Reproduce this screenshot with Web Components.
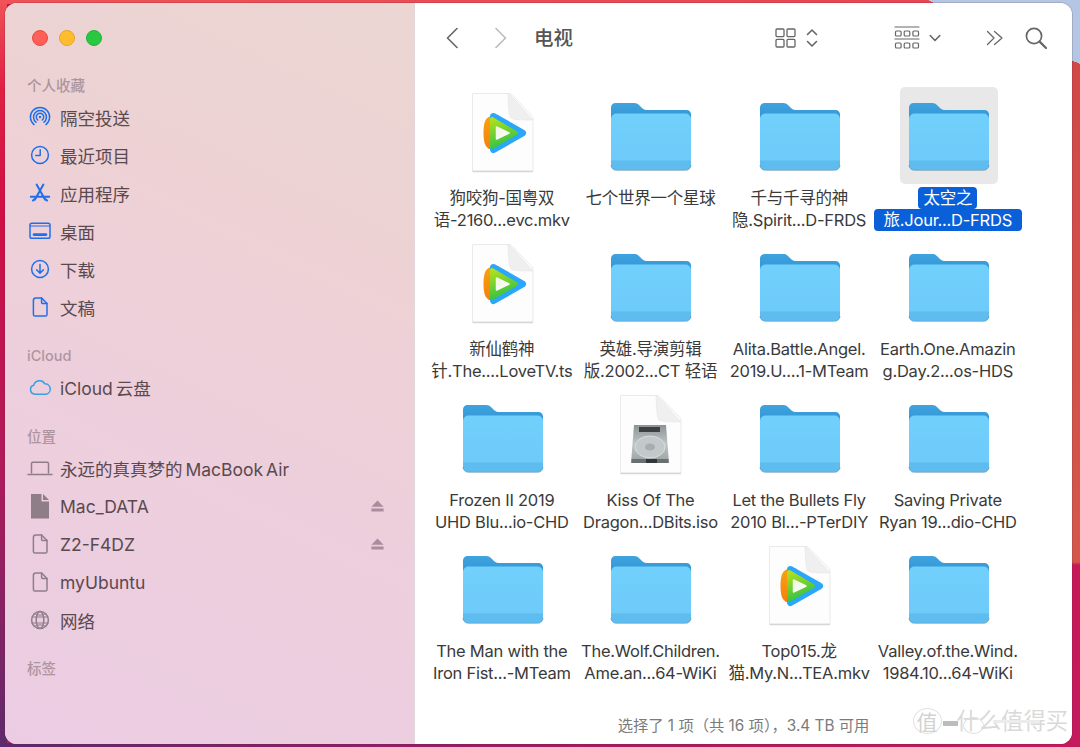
<!DOCTYPE html>
<html lang="zh">
<head>
<meta charset="utf-8">
<title>电视</title>
<style>
  html, body { margin: 0; height: 100%; overflow: hidden; }
  body { font-family: Inter, "Noto Sans CJK SC", sans-serif; }
</style>
</head>
<body>
<mac-desktop>
  <finder-window>
    <finder-sidebar slot="sidebar">
      <side-section label="个人收藏">
        <side-item icon="airdrop">隔空投送</side-item>
        <side-item icon="clock">最近项目</side-item>
        <side-item icon="apps">应用程序</side-item>
        <side-item icon="desktop">桌面</side-item>
        <side-item icon="download">下载</side-item>
        <side-item icon="doc">文稿</side-item>
      </side-section>
      <side-section label="iCloud">
        <side-item icon="cloud">iCloud 云盘</side-item>
      </side-section>
      <side-section label="位置" style="margin-top:19px">
        <side-item icon="laptop" tone="gray">永远的真真梦的 MacBook Air</side-item>
        <side-item icon="docfill" tone="gray" eject>Mac_DATA</side-item>
        <side-item icon="doc" tone="gray" eject>Z2-F4DZ</side-item>
        <side-item icon="doc" tone="gray">myUbuntu</side-item>
        <side-item icon="globe" tone="gray">网络</side-item>
      </side-section>
      <side-section label="标签"></side-section>
    </finder-sidebar>
    <finder-main slot="main">
      <finder-toolbar title="电视"></finder-toolbar>
      <file-grid>
        <file-item kind="video"><span>狗咬狗-国粤双</span><span>语-2160...evc.mkv</span></file-item>
        <file-item><span>七个世界一个星球</span></file-item>
        <file-item><span>千与千寻的神</span><span>隐.Spirit...D-FRDS</span></file-item>
        <file-item selected><span>太空之</span><span>旅.Jour...D-FRDS</span></file-item>

        <file-item kind="video"><span>新仙鹤神</span><span>针.The....LoveTV.ts</span></file-item>
        <file-item><span>英雄.导演剪辑</span><span>版.2002...CT 轻语</span></file-item>
        <file-item><span>Alita.Battle.Angel.</span><span>2019.U....1-MTeam</span></file-item>
        <file-item><span>Earth.One.Amazin</span><span>g.Day.2...os-HDS</span></file-item>

        <file-item><span>Frozen II 2019</span><span>UHD Blu...io-CHD</span></file-item>
        <file-item kind="disk"><span>Kiss Of The</span><span>Dragon...DBits.iso</span></file-item>
        <file-item><span>Let the Bullets Fly</span><span>2010 Bl...-PTerDIY</span></file-item>
        <file-item><span>Saving Private</span><span>Ryan 19...dio-CHD</span></file-item>

        <file-item><span>The Man with the</span><span>Iron Fist...-MTeam</span></file-item>
        <file-item><span>The.Wolf.Children.</span><span>Ame.an...64-WiKi</span></file-item>
        <file-item kind="video"><span>Top015.龙</span><span>猫.My.N...TEA.mkv</span></file-item>
        <file-item><span>Valley.of.the.Wind.</span><span>1984.10...64-WiKi</span></file-item>
      </file-grid>
      <status-bar>选择了 1 项（共 16 项），3.4 TB 可用</status-bar>
      <site-watermark></site-watermark>
    </finder-main>
  </finder-window>
</mac-desktop>

<script>
// iconos de la barra lateral, todos en un viewBox de 26x26
const SIDE_ICONS = {
  airdrop: `<path d="M7 20.6A9.6 9.6 0 1 1 19 20.6M9 18.2A6.5 6.5 0 1 1 17 18.2M10.8 16A3.7 3.7 0 1 1 15.2 16"/><circle cx="13" cy="13" r="1.2" fill="currentColor" stroke="none"/>`,
  clock: `<circle cx="13" cy="13" r="8.4"/><path d="M13.2 7.8V13.6H8.8"/>`,
  apps: `<path d="M9.6 4.6L18 19.6M16.4 4.6L8 19.6M3.8 16.8H22.2" stroke-width="2"/><path d="M6 20.5l1.4-1.2M20 20.5l-1.4-1.2" stroke-width="2"/>`,
  desktop: `<rect x="3" y="5.2" width="20" height="15" rx="1.8"/><path d="M3 8H23" stroke-width="1"/><path d="M7 16.6H19" stroke-width="2.6"/>`,
  download: `<circle cx="13" cy="13" r="8.4"/><path d="M13 8.4V17M9.6 13.8L13 17.2L16.4 13.8"/>`,
  doc: `<path d="M8.8 4H14.6L20 9.6V20.4A1.6 1.6 0 0 1 18.4 22H8A1.6 1.6 0 0 1 6.4 20.4V6.4A2.4 2.4 0 0 1 8.8 4Z"/><path d="M14.6 4V8.4A1.2 1.2 0 0 0 15.8 9.6H20"/>`,
  cloud: `<path d="M8 20.2A4.6 4.6 0 0 1 6.8 11.2A6 6 0 0 1 17.8 9.8A5.3 5.3 0 0 1 19.4 20.2Z"/>`,
  laptop: `<path d="M4.5 18V8.4A1.2 1.2 0 0 1 5.7 7.2H20.3A1.2 1.2 0 0 1 21.5 8.4V18"/><path d="M1 19.4H25"/>`,
  docfill: `<path d="M4 1H14.5V8.5H22V25.5H4Z" fill="currentColor" stroke="none"/><path d="M16 1L22 7H16Z" fill="currentColor" stroke="none"/>`,
  globe: `<circle cx="13" cy="13" r="8.4"/><ellipse cx="13" cy="13" rx="3.8" ry="8.4"/><path d="M5 10H21M5 16H21M7 6.5Q13 10 19 6.5M7 19.5Q13 16 19 19.5" stroke-width="1"/>`
}

class MacDesktop extends HTMLElement {
  constructor() {
    super()
    this.attachShadow({ mode: 'open' })
    this.shadowRoot.innerHTML = `
      <style>
        :host {
          display: block;
          box-sizing: border-box;
          width: 1080px;
          height: 747px;
          padding: 3px 8px 3px 5px;
          background:
            linear-gradient(22.7deg, transparent 1047px, #b3c7e4 1047px),
            linear-gradient(to bottom, #d04648 0, #d3584a 562px, transparent 565px) right top / 12px 100% no-repeat,
            linear-gradient(to right, #ef5257, #e64450) left top / 100% 4px no-repeat,
            linear-gradient(to bottom, #f05256 0, #e01f45 90px, #cf0f45 220px, #b01a5c 470px, #732668 680px, #5c2a6c 747px) left top / 7px 100% no-repeat,
            linear-gradient(to right, #5c2a6c 0, #8a1f66 300px, #b01a5c 700px, #c8185a 1080px) left bottom / 100% 4px no-repeat,
            linear-gradient(to bottom, #d01242, #c41a5e);
        }
      </style>
      <slot></slot>
    `
  }
}

class FinderWindow extends HTMLElement {
  constructor() {
    super()
    this.attachShadow({ mode: 'open' })
    this.shadowRoot.innerHTML = `
      <style>
        :host {
          display: flex;
          height: 100%;
          border-radius: 12px;
          overflow: hidden;
          background: #fff;
          box-shadow: 0 0 0 1px rgba(90, 40, 50, .18);
        }
      </style>
      <slot name="sidebar"></slot>
      <slot name="main"></slot>
    `
  }
}

class FinderSidebar extends HTMLElement {
  constructor() {
    super()
    this.attachShadow({ mode: 'open' })
    this.shadowRoot.innerHTML = `
      <style>
        :host {
          display: block;
          box-sizing: border-box;
          flex: 0 0 410px;
          padding: 27px 30px 0 22px;
          background: linear-gradient(205deg, #ebd6d2 0%, #edd2d4 28%, #edcfdc 58%, #ebcce3 100%);
          border-right: 1px solid #e3d6db;
        }
        .lights { display: flex; gap: 11px; margin: 0 0 28px 5px; }
        .lights i { width: 16px; height: 16px; border-radius: 50%; box-sizing: border-box; }
        .red { background: #ff5f57; border: 1px solid #e8483f; }
        .yellow { background: #ffbd2e; border: 1px solid #e5a524; }
        .green { background: #28c840; border: 1px solid #22b236; }
      </style>
      <div class="lights"><i class="red"></i><i class="yellow"></i><i class="green"></i></div>
      <slot></slot>
    `
  }
}

class SideSection extends HTMLElement {
  constructor() {
    super()
    this.attachShadow({ mode: 'open' })
  }

  connectedCallback() {
    this.shadowRoot.innerHTML = `
      <style>
        :host { display: block; margin-top: 18px; }
        .label {
          height: 24px;
          line-height: 24px;
          font-size: 14.5px;
          font-weight: 500;
          color: #ad959f;
        }
      </style>
      <div class="label">${this.getAttribute('label') ?? ''}</div>
      <slot></slot>
    `
  }
}

class SideItem extends HTMLElement {
  constructor() {
    super()
    this.attachShadow({ mode: 'open' })
  }

  connectedCallback() {
    const icon = this.getAttribute('icon') ?? 'doc'
    const color = icon === 'cloud' ? '#35a0e2' : this.getAttribute('tone') === 'gray' ? '#8f7d88' : '#1f6fec'
    const eject = this.hasAttribute('eject')
      ? `<svg class="eject" width="13" height="12" viewBox="0 0 13 12"><path d="M6.5 0.5L12.6 6.8H0.4Z M0.4 8.4H12.6V11.5H0.4Z" fill="#a98c9d"/></svg>`
      : ''
    this.shadowRoot.innerHTML = `
      <style>
        :host {
          display: flex;
          align-items: center;
          gap: 7px;
          height: 38px;
          font-size: 17.5px;
          word-spacing: -2px;
          color: #5a494f;
        }
        .icon { flex: none; color: ${color}; fill: none; stroke: currentColor; stroke-width: 1.5; stroke-linecap: round; stroke-linejoin: round; }
        .eject { margin-left: auto; }
      </style>
      <svg class="icon" width="26" height="26" viewBox="0 0 26 26">${SIDE_ICONS[icon]}</svg>
      <slot></slot>
      ${eject}
    `
  }
}

class FinderMain extends HTMLElement {
  constructor() {
    super()
    this.attachShadow({ mode: 'open' })
    this.shadowRoot.innerHTML = `
      <style>
        :host { display: flex; flex-direction: column; flex: 1; position: relative; background: #fff; }
      </style>
      <slot></slot>
    `
  }
}

class FinderToolbar extends HTMLElement {
  constructor() {
    super()
    this.attachShadow({ mode: 'open' })
  }

  connectedCallback() {
    this.shadowRoot.innerHTML = `
      <style>
        :host {
          display: flex;
          align-items: center;
          height: 70px;
          flex: none;
          padding-left: 31px;
          color: #666;
        }
        svg { flex: none; fill: none; stroke: currentColor; stroke-width: 1.6; stroke-linecap: round; stroke-linejoin: round; }
        h1 { margin: 0 0 3px 27px; font-size: 19.5px; font-weight: 500; color: #555; }
        .off { color: #bbb; margin-left: 37px; }
        .view { margin-left: auto; }
      </style>
      <svg width="12" height="22" viewBox="0 0 12 22"><path d="M11 1.5L1.5 11L11 20.5"/></svg>
      <svg class="off" width="12" height="22" viewBox="0 0 12 22"><path d="M1 1.5L10.5 11L1 20.5"/></svg>
      <h1>${this.getAttribute('title') ?? ''}</h1>
      <svg class="view" width="21" height="20" viewBox="0 0 21 20" style="stroke-width:1.3">
        <rect x="1" y="1" width="8" height="7.6" rx="1"/><rect x="12" y="1" width="8" height="7.6" rx="1"/>
        <rect x="1" y="11.4" width="8" height="7.6" rx="1"/><rect x="12" y="11.4" width="8" height="7.6" rx="1"/>
      </svg>
      <svg style="margin-left:10px" width="12" height="20" viewBox="0 0 12 20"><path d="M1.5 6.5L6 2L10.5 6.5M1.5 13.5L6 18L10.5 13.5"/></svg>
      <svg style="margin-left:76px;stroke-width:1.2" width="26" height="24" viewBox="0 0 26 24">
        <path d="M1 1H25M1 13H25"/>
        <rect x="1.5" y="5" width="5.6" height="5" rx="1"/><rect x="10.2" y="5" width="5.6" height="5" rx="1"/><rect x="18.9" y="5" width="5.6" height="5" rx="1"/>
        <rect x="1.5" y="17" width="5.6" height="5" rx="1"/><rect x="10.2" y="17" width="5.6" height="5" rx="1"/><rect x="18.9" y="17" width="5.6" height="5" rx="1"/>
      </svg>
      <svg style="margin-left:9px" width="12" height="8" viewBox="0 0 12 8"><path d="M1.2 1.5L6 6.5L10.8 1.5"/></svg>
      <svg style="margin-left:45px;stroke-width:1.3" width="18" height="16" viewBox="0 0 18 16"><path d="M1.5 1.5L8 8L1.5 14.5M8.5 1.5L16 8L8.5 14.5"/></svg>
      <svg style="margin:0 25px 0 21px;stroke-width:1.7" width="22" height="22" viewBox="0 0 22 22"><circle cx="9" cy="9" r="7.6"/><path d="M14.6 14.6L21 21" stroke-width="2.2"/></svg>
    `
  }
}

class FileGrid extends HTMLElement {
  constructor() {
    super()
    this.attachShadow({ mode: 'open' })
    this.shadowRoot.innerHTML = `
      <style>
        :host {
          display: grid;
          grid-template-columns: repeat(4, 148.67px);
          grid-auto-rows: 151px;
          flex: 1;
          padding: 14px 0 0 13.5px;
        }
      </style>
      <slot></slot>
    `
  }
}

const FOLDER_ICON = `
  <svg width="82" height="70" viewBox="0 0 82 70">
    <defs>
      <linearGradient id="back" x1="0" y1="0" x2="0" y2="1"><stop offset="0" stop-color="#3fa3df"/><stop offset="1" stop-color="#2b8dcf"/></linearGradient>
      <linearGradient id="front" x1="0" y1="0" x2="0" y2="1"><stop offset="0" stop-color="#72d0fc"/><stop offset="1" stop-color="#6cc9f9"/></linearGradient>
    </defs>
    <path d="M1 6.5A4.5 4.5 0 0 1 5.500 2H24C27 2 28 3 30 5C32 7 33.500 9 37 9H76.500A4.500 4.500 0 0 1 81 13.500V30H1Z" fill="url(#back)"/>
    <path d="M1 17.500A5.500 5.500 0 0 1 6.500 12.500H75.500A5.500 5.500 0 0 1 81 17.500V63.500A5.500 5.500 0 0 1 75.500 69H6.500A5.500 5.500 0 0 1 1 63.500Z" fill="url(#front)"/>
    <path d="M1 59.500H81V63.500A5.500 5.500 0 0 1 75.500 69H6.500A5.500 5.500 0 0 1 1 63.500Z" fill="#5fbcee"/>
    <path d="M1 64A5.500 5.500 0 0 0 6.500 69.400H75.500A5.500 5.500 0 0 0 81 64" fill="none" stroke="#4a86ad" stroke-opacity=".55" stroke-width="1"/>
  </svg>`

const PAGE_SHAPE = `
  <path d="M1.500 1.500H37C39 1.500 40 2 41.500 3.500L60 22.500C61.500 24 62 25 62 27V79H1.500Z" fill="#fdfdfd" stroke="#eaeaea"/>
  <path d="M37 1.500C37.500 14 38 23 39.500 25.500C42 28 50 28 62 28L39 2.500Z" fill="#efefef" stroke="#e4e4e4" stroke-width=".6"/>
  <path d="M1.500 79.500H62" stroke="#d6d6d6" stroke-width="1.400"/>`

const VIDEO_ICON = `
  <svg width="64" height="81" viewBox="0 0 64 81">
    <defs>
      <linearGradient id="grn" x1="0" y1="0" x2="0.300" y2="1"><stop offset="0" stop-color="#b3e01a"/><stop offset="1" stop-color="#37c245"/></linearGradient>
      <linearGradient id="ply" x1="0" y1="0" x2="1" y2="1"><stop offset="0" stop-color="#eef5e0"/><stop offset="1" stop-color="#ffffff"/></linearGradient>
      <linearGradient id="org" x1="0" y1="0" x2="0" y2="1"><stop offset="0" stop-color="#f9a30d"/><stop offset="1" stop-color="#f57e10"/></linearGradient>
    </defs>
    ${PAGE_SHAPE}
    <g transform="translate(12 20)">
      <path d="M8.500 4C3.500 5 .500 8 .500 21C.500 33 3.500 36.500 8.500 37.500L16 38V3Z" fill="url(#org)"/>
      <path d="M10.500 4.500L39.500 21L10.500 37.500Z" fill="#2aa6fb" stroke="#2aa6fb" stroke-width="7" stroke-linejoin="round"/>
      <path d="M9 7L33 21L9 35Z" fill="url(#grn)" stroke="url(#grn)" stroke-width="4" stroke-linejoin="round"/>
      <path d="M13.500 15L26 21L13.500 27Z" fill="url(#ply)" stroke="url(#ply)" stroke-width="1.500" stroke-linejoin="round"/>
    </g>
  </svg>`

const DISK_ICON = `
  <svg width="64" height="81" viewBox="0 0 64 81">
    <defs>
      <linearGradient id="hdd" x1="0" y1="0" x2="0" y2="1"><stop offset="0" stop-color="#8b9395"/><stop offset=".5" stop-color="#c0c5c6"/><stop offset="1" stop-color="#9aa0a1"/></linearGradient>
    </defs>
    ${PAGE_SHAPE}
    <g transform="translate(0 4)">
      <path d="M15 27H47L50 65H12Z" fill="url(#hdd)"/>
      <rect x="20" y="29" width="21" height="5" fill="#3c4041"/>
      <ellipse cx="31" cy="49" rx="15" ry="11" fill="#c3c9ca" stroke="#dfe3e3" stroke-width=".8"/>
      <ellipse cx="31" cy="49" rx="5" ry="3.600" fill="#a7aeaf"/>
      <rect x="12.500" y="61" width="37" height="4" fill="#6a6f70"/>
      <rect x="27" y="61" width="11" height="4" fill="#333637"/>
    </g>
  </svg>`

class FileItem extends HTMLElement {
  constructor() {
    super()
    this.attachShadow({ mode: 'open' })
  }

  connectedCallback() {
    const kind = this.getAttribute('kind') ?? 'folder'
    const art = { folder: FOLDER_ICON, video: VIDEO_ICON, disk: DISK_ICON }[kind]
    this.shadowRoot.innerHTML = `
      <style>
        :host {
          display: flex;
          flex-direction: column;
          align-items: center;
          font-size: 16.5px;
          line-height: 22px;
          letter-spacing: -.25px;
          color: #3a3a3a;
          white-space: nowrap;
        }
        .thumb {
          display: flex;
          align-items: center;
          justify-content: center;
          width: 98px;
          height: 97px;
          margin-bottom: 3px;
          border-radius: 5px;
          flex: none;
        }
        .thumb svg { display: block; }
        .thumb.lift svg { margin-bottom: 6px; }
        .name { padding-right: 2px; }
        :host([selected]) .thumb { background: #e8e8e8; }
        ::slotted(span) {
          display: block;
          width: fit-content;
          margin: 0 auto;
          border-radius: 4px;
        }
        :host([selected]) ::slotted(span) { background: #0a60d8; color: #fff; }
        :host([selected]) ::slotted(span:first-child) { padding: 0 5px; }
        :host([selected]) ::slotted(span:last-child) { padding: 0 10px; }
      </style>
      <div class="thumb ${kind === 'folder' ? '' : 'lift'}">${art}</div>
      <div class="name"><slot></slot></div>
    `
  }
}

class StatusBar extends HTMLElement {
  constructor() {
    super()
    this.attachShadow({ mode: 'open' })
    this.shadowRoot.innerHTML = `
      <style>
        :host {
          display: flex;
          align-items: center;
          justify-content: center;
          box-sizing: border-box;
          height: 38px;
          padding-bottom: 3px;
          flex: none;
          font-size: 15.3px;
          color: #7b7b7b;
        }
      </style>
      <slot></slot>
    `
  }
}

// marca de agua encima de la esquina inferior
class SiteWatermark extends HTMLElement {
  constructor() {
    super()
    this.attachShadow({ mode: 'open' })
    this.shadowRoot.innerHTML = `
      <style>
        :host {
          position: absolute;
          right: 4px;
          bottom: 10px;
          display: flex;
          align-items: center;
          color: #d9d9d9;
          pointer-events: none;
        }
        .seal {
          display: flex;
          align-items: center;
          justify-content: center;
          box-sizing: border-box;
          width: 29px;
          height: 26px;
          border: 1px solid #e2e2e2;
          border-radius: 50%;
          font-size: 21px;
          color: #d2d2d2;
        }
        .bar { width: 15px; height: 5px; margin: 5px -1px 0 1px; background: #bdbdbd; }
        .name { position: relative; font-size: 22.3px; line-height: 26px; }
        .ring {
          position: absolute;
          left: 6px;
          top: 9px;
          width: 19px;
          height: 15px;
          border: 1px solid #dedede;
          border-radius: 50%;
        }
        .line {
          position: absolute;
          left: 36px;
          top: 12px;
          width: 47px;
          height: 3px;
          background: #ececec;
        }
      </style>
      <span class="seal">值</span><span class="bar"></span><span class="name">什么值得买<i class="ring"></i><i class="line"></i></span>
    `
  }
}

customElements.define('mac-desktop', MacDesktop)
customElements.define('finder-window', FinderWindow)
customElements.define('finder-sidebar', FinderSidebar)
customElements.define('side-section', SideSection)
customElements.define('side-item', SideItem)
customElements.define('finder-main', FinderMain)
customElements.define('finder-toolbar', FinderToolbar)
customElements.define('file-grid', FileGrid)
customElements.define('file-item', FileItem)
customElements.define('status-bar', StatusBar)
customElements.define('site-watermark', SiteWatermark)
</script>
</body>
</html>
